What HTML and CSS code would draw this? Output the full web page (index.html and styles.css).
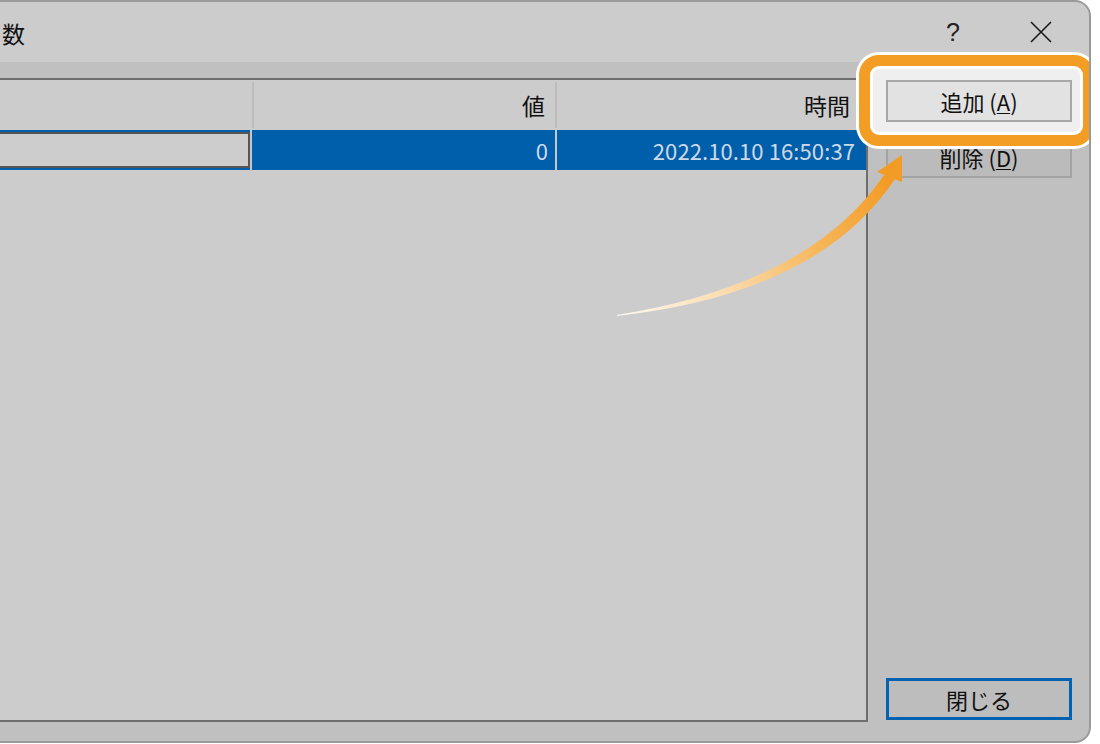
FILE: index.html
```html
<!DOCTYPE html>
<html lang="ja">
<head>
<meta charset="utf-8">
<title>グローバル変数</title>
<link rel="stylesheet" href="styles.css">
</head>
<body>
<div class="window">
  <div class="titlebar">
    <span class="title">数</span>
    <span class="help">?</span>
    <span class="close-x">
      <svg width="22" height="22" viewBox="0 0 22 22"><path d="M1 1 L21 21 M21 1 L1 21" stroke="#1a1a1a" stroke-width="1.6" fill="none"/></svg>
    </span>
  </div>
  <div class="body">
    <div class="list">
      <div class="row head">
        <div class="c1 h1"></div>
        <div class="hsep"></div>
        <div class="c2 h2">値</div>
        <div class="hsep"></div>
        <div class="c3">時間</div>
      </div>
      <div class="row sel">
        <div class="c1 s1"><div class="edit"></div></div>
        <div class="rsep"></div>
        <div class="c2 s2">0</div>
        <div class="rsep"></div>
        <div class="c3 s3">2022.10.10 16:50:37</div>
      </div>
    </div>
    <div class="side">
      <button class="btn add">追加 (<u>A</u>)</button>
      <button class="btn del">削除 (<u>D</u>)</button>
      <button class="btn closebtn">閉じる</button>
    </div>
  </div>
  <div class="highlight"></div>
  <svg class="arrow" width="320" height="190" viewBox="600 140 320 190">
    <defs>
      <linearGradient id="ag" gradientUnits="userSpaceOnUse" x1="617" y1="315" x2="885" y2="178">
        <stop offset="0" stop-color="#fffaf3"/>
        <stop offset="0.35" stop-color="#fbdcb0"/>
        <stop offset="0.7" stop-color="#f6b658"/>
        <stop offset="1" stop-color="#f39c25"/>
      </linearGradient>
    </defs>
    <path d="M617 315 Q810 284 884 175 L895 179 Q818 294 617 316 Z" fill="url(#ag)"/>
    <path d="M902 155 L877 172 L902 182 Z" fill="#f39c25"/>
  </svg>
</div>
</body>
</html>
```

FILE: styles.css
```css
html, body {
  margin: 0;
  padding: 0;
  background: #ffffff;
}

body {
  width: 1100px;
  height: 744px;
  overflow: hidden;
  font-family: "Noto Sans CJK JP", "Noto Sans", sans-serif;
  color: #111;
}

.window {
  position: relative;
  width: 1089px;
  height: 739px;
  border-top: 2px solid #9a9a9a;
  border-right: 2px solid #9a9a9a;
  border-bottom: 2px solid #9a9a9a;
  border-top-right-radius: 16px;
  border-bottom-right-radius: 16px;
  background: #c0c0c0;
  display: flex;
  flex-direction: column;
  overflow: hidden;
}

.titlebar {
  height: 60px;
  background: #cccccc;
  display: flex;
  align-items: center;
  border-top-right-radius: 14px;
}

.title {
  padding-left: 2px;
  font-size: 23px;
  line-height: 1;
  margin-top: 2px;
  color: #111;
}

.help {
  margin-left: auto;
  font-family: "Liberation Sans", sans-serif;
  font-size: 25px;
  line-height: 1;
  color: #222;
  margin-top: 0;
}

.close-x {
  display: flex;
  margin-left: 70px;
  margin-right: 37px;
  margin-top: 0;
}

.body {
  flex: 1;
  display: flex;
  padding: 16px 0 19px 0;
}

.list {
  width: 866px;
  height: 640px;
  border-top: 2px solid #6e6e6e;
  border-bottom: 2px solid #6e6e6e;
  border-right: 2px solid #6e6e6e;
  background: #cccccc;
}

.row {
  display: flex;
}

.head {
  height: 50px;
  align-items: stretch;
  font-size: 23px;
}

.h1 { width: 252px; }
.h2 {
  width: 301px;
  display: flex;
  align-items: center;
  justify-content: flex-end;
  padding-right: 10px;
  box-sizing: border-box;
}
.head .c3 {
  flex: 1;
  display: flex;
  align-items: center;
  justify-content: flex-end;
  padding-right: 16px;
}

.hsep {
  width: 2px;
  margin: 2px 0;
  background: #bcbcbc;
}

.sel {
  height: 40px;
  background: #005fab;
  color: #cfd8e7;
  font-size: 22px;
}

.s1 {
  width: 250px;
  padding: 2px 0;
  box-sizing: border-box;
}

.edit {
  height: 100%;
  box-sizing: border-box;
  border: 2px solid #555555;
  border-left: none;
  background: #cdcdcd;
}

.rsep {
  width: 2px;
  background: #c4c8ce;
}

.s2 {
  width: 303px;
  display: flex;
  align-items: center;
  justify-content: flex-end;
  padding-right: 7px;
  box-sizing: border-box;
}

.s3 {
  flex: 1;
  display: flex;
  align-items: center;
  justify-content: flex-end;
  padding-right: 9px;
  margin-right: 2px;
  letter-spacing: 0.1px;
}

.side {
  width: 186px;
  margin-left: 18px;
  display: flex;
  flex-direction: column;
  padding-top: 2px;
  padding-bottom: 2px;
}

.btn {
  height: 42px;
  box-sizing: border-box;
  font-family: "Noto Sans CJK JP", "Noto Sans", sans-serif;
  font-size: 22px;
  color: #111;
  padding: 0;
  display: flex;
  align-items: center;
  justify-content: center;
}

.btn u {
  text-decoration-thickness: 1px;
  text-underline-offset: 2px;
}

.add {
  position: relative;
  z-index: 3;
  background: #e2e2e2;
  border: 2px solid #a8a8a8;
}

.del {
  margin-top: 14px;
  background: #bbbbbb;
  border: 2px solid #a3a3a3;
}

.closebtn {
  margin-top: auto;
  background: #bdbdbd;
  border: 3px solid #0062b0;
}

.highlight {
  position: absolute;
  left: 859px;
  top: 53px;
  width: 235px;
  height: 91px;
  box-sizing: border-box;
  border: 11px solid #f49d25;
  border-radius: 20px;
  background: #efefef;
  box-shadow: 0 0 0 3px #ffffff, inset 0 0 0 3px #ffffff;
  z-index: 2;
}

.arrow {
  position: absolute;
  left: 600px;
  top: 138px;
  z-index: 4;
}
```
